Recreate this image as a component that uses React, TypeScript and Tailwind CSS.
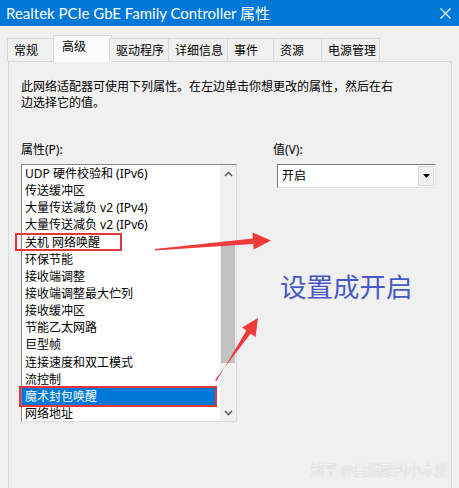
import React from "react";

const items = [
  "UDP 硬件校验和 (IPv6)",
  "传送缓冲区",
  "大量传送减负 v2 (IPv4)",
  "大量传送减负 v2 (IPv6)",
  "关机 网络唤醒",
  "环保节能",
  "接收端调整",
  "接收端调整最大伫列",
  "接收缓冲区",
  "节能乙太网路",
  "巨型帧",
  "连接速度和双工模式",
  "流控制",
  "魔术封包唤醒",
  "网络地址",
];

const tabs = [
  { label: "常规", w: "w-[48px]" },
  { label: "高级", w: "w-[47px]", active: true },
  { label: "驱动程序", w: "w-[60px]" },
  { label: "详细信息", w: "w-[60px]" },
  { label: "事件", w: "w-[47px]" },
  { label: "资源", w: "w-[49px]" },
  { label: "电源管理", w: "w-[59px]" },
];

function Chevron({ up }: { up?: boolean }) {
  return (
    <svg width="9" height="6" viewBox="0 0 9 6">
      <path
        d={up ? "M1 5 L4.5 1.5 L8 5" : "M1 1 L4.5 4.5 L8 1"}
        fill="none"
        stroke="#606060"
        strokeWidth="1.6"
      />
    </svg>
  );
}

export default function App() {
  return (
    <div className="relative w-[459px] h-[488px] overflow-hidden bg-[#f0f0f0] font-['Noto_Sans','Noto_Sans_CJK_SC',sans-serif] text-black">
      {/* Title bar */}
      <div className="h-[26px] bg-[#0078d7] flex items-center justify-between pl-[6px] pr-[8px]">
        <span className="text-white text-[15px] leading-none font-['Lato','Noto_Sans_CJK_SC',sans-serif]">
          Realtek PCIe GbE Family Controller 属性
        </span>
        <svg width="11" height="11" viewBox="0 0 11 11">
          <path d="M0.5 0.5 L10.5 10.5 M10.5 0.5 L0.5 10.5" stroke="#fff" strokeWidth="1.1" />
        </svg>
      </div>

      {/* Tabs */}
      <div className="mt-[10px] pl-[7px] flex items-end h-[25px] relative z-10">
        {tabs.map((t) =>
          t.active ? (
            <div
              key={t.label}
              className={`${t.w} -mx-[2px] box-content px-[2px] h-[26px] -mb-[1px] bg-[#fbfbfb] border border-b-0 border-[#d9d9d9] pl-[8px] text-[12px] leading-[22px]`}
            >
              {t.label}
            </div>
          ) : (
            <div
              key={t.label}
              className={`${t.w} h-[23px] bg-[#f0f0f0] border border-b-0 border-[#d9d9d9] -ml-px first:ml-0 pl-[6px] text-[12px] leading-[23px]`}
            >
              {t.label}
            </div>
          )
        )}
      </div>

      {/* Panel */}
      <div className="ml-[8px] w-[444px] h-[440px] border border-[#d9d9d9] bg-[#f0f0f0]">
        <p className="pl-[12px] pt-[17px] text-[12px] leading-[16px]">
          此网络适配器可使用下列属性。在左边单击你想更改的属性，然后在右
          <br />
          边选择它的值。
        </p>

        <div className="flex pl-[12px] mt-[31px]">
          {/* Left column */}
          <div className="w-[216px]">
            <div className="text-[12px] leading-[16px] h-[16px]">属性(P):</div>
            <div className="mt-[6px] h-[258px] flex border border-[#828790] border-r-[#dcdcdc] border-b-[#dcdcdc] bg-white">
              <div className="flex-1 flex flex-col">
                {items.map((it, i) =>
                  i === 13 ? (
                    <div
                      key={it}
                      className="h-[17.15px] leading-[17.15px] pl-[3px] mr-[4px] text-[12px] bg-[#0078d7] text-white whitespace-nowrap"
                    >
                      {it}
                    </div>
                  ) : (
                    <div
                      key={it}
                      className="h-[17.15px] leading-[17.15px] pl-[3px] text-[12px] whitespace-nowrap"
                    >
                      {it}
                    </div>
                  )
                )}
              </div>
              <div className="w-[16px] bg-[#f0f0f0] flex flex-col">
                <div className="h-[17px] flex items-center justify-center">
                  <Chevron up />
                </div>
                <div className="flex-1">
                  <div className="mt-[60px] h-[121px] mx-[1px] bg-[#c2c2c2]" />
                </div>
                <div className="h-[17px] flex items-center justify-center">
                  <Chevron />
                </div>
              </div>
            </div>
          </div>

          {/* Right column */}
          <div className="ml-[36px] flex flex-col">
            <div className="text-[12px] leading-[16px] h-[16px]">值(V):</div>
            <div className="mt-[6px] ml-[4px] w-[159px] h-[24px] flex border border-[#7a7a7a] border-r-[#e3e3e3] border-b-[#e3e3e3] bg-white">
              <div className="flex-1 pl-[4px] text-[12px] leading-[22px]">开启</div>
              <div className="w-[16px] my-[1px] mr-[1px] bg-[#f0f0f0] border border-[#dadada] flex items-center justify-center">
                <svg width="7" height="4" viewBox="0 0 7 4">
                  <path d="M0 0 L7 0 L3.5 4 Z" fill="#000" />
                </svg>
              </div>
            </div>
            <div className="mt-[83px] ml-[7px] text-[26.5px] leading-[30px] text-[#4659c4] font-['Noto_Sans_CJK_SC',sans-serif]">
              设置成开启
            </div>
          </div>
        </div>
      </div>

      {/* Red annotation boxes */}
      <div className="absolute left-[15px] top-[233px] w-[107px] h-[18px] border-2 border-[#e3363a]" />
      <div className="absolute left-[19px] top-[386px] w-[198px] h-[21px] border-2 border-[#e3363a]" />

      {/* Red arrows */}
      <svg className="absolute left-0 top-0" width="459" height="488" viewBox="0 0 459 488">
        <polygon points="155,250.5 253.4,244 253,238.5 155,249" fill="#ee3a3a" />
        <polygon points="271,240.5 253.7,249.5 252.5,232.5" fill="#ee3a3a" />
        <polygon points="215,380 251.5,332.5 247,329.5 216.5,381" fill="#ee3a3a" />
        <polygon points="258,318 255.5,337 242,327.5" fill="#ee3a3a" />
      </svg>

      {/* Watermark */}
      <div className="absolute right-[11px] top-[460px] text-[13.5px] leading-[18px] text-[#f4f4f4] [text-shadow:0_0_1px_#b4b4b4] font-['Noto_Sans_CJK_SC',sans-serif] whitespace-nowrap">
        知乎 @自然醒的小木屋
      </div>
    </div>
  );
}
